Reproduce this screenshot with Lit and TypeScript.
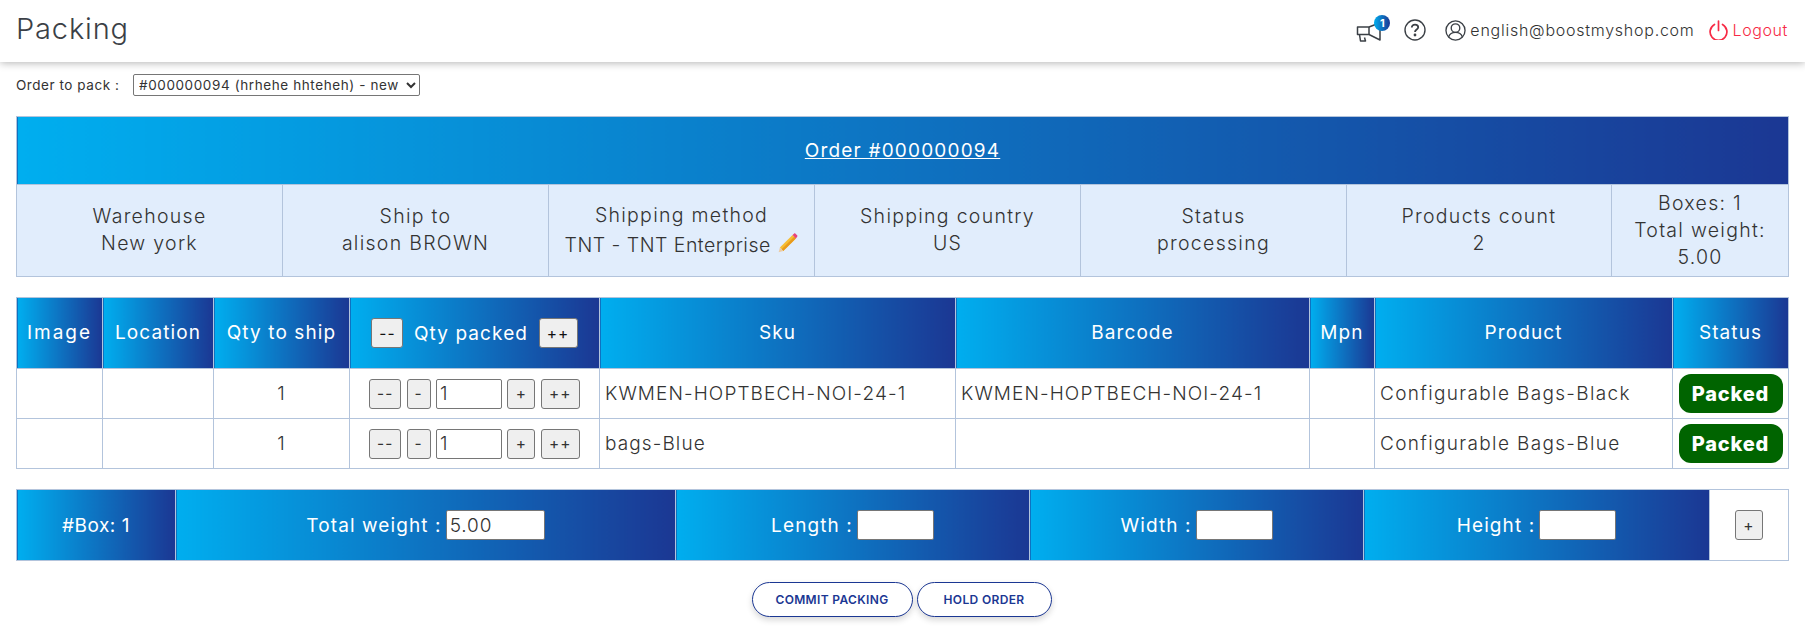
import { LitElement, html, css } from "lit";
import { customElement } from "lit/decorators.js";

const rows = [
  { sku: "KWMEN-HOPTBECH-NOI-24-1", barcode: "KWMEN-HOPTBECH-NOI-24-1", product: "Configurable Bags-Black" },
  { sku: "bags-Blue", barcode: "", product: "Configurable Bags-Blue" },
];

@customElement("app-root")
export class AppRoot extends LitElement {
  static styles = css`
    :host { display: block; height: 630px; overflow: hidden; background: #fff; color: #333;
      font-family: Inter, "Liberation Sans", sans-serif; font-size: 19px; font-weight: 350; letter-spacing: 1.1px; }
    * { box-sizing: border-box; }
    .top { height: 62px; display: flex; align-items: center; justify-content: space-between; padding: 0 17px 2px 16px;
      box-shadow: 0 1px 8px rgba(0,0,0,.3); background: #fff; }
    h1 { margin: 0 0 3px; font-weight: 300; font-size: 29px; letter-spacing: .85px; color: #3b3f46; }
    .tools { display: flex; align-items: center; font-size: 16px; letter-spacing: .75px; }
    .bell { position: relative; display: block; width: 27px; height: 24px; margin-right: 21px; }
    .bell svg { display: block; margin-top: 4px; }
    .badge { position: absolute; left: 18px; top: -3px; width: 16px; height: 16px; border-radius: 50%;
      background: linear-gradient(to right, #00aeef, #1b3793); color: #fff; font-size: 11px; font-weight: 700;
      letter-spacing: 0; display: flex; align-items: center; justify-content: center; }
    .ico { display: block; flex: none; }
    .help { margin-right: 19px; }
    .user { margin-right: 4px; }
    .logout { display: flex; align-items: center; color: #f72a45; margin-left: 14px; gap: 5px; letter-spacing: .6px; }
    .content { padding: 12px 17px 0 16px; }
    .pick { display: flex; align-items: center; height: 22px; font-size: 13.5px; font-weight: 400; letter-spacing: .55px; }
    .pick label { width: 117px; }
    select { width: 287px; height: 22px; font-family: inherit; font-size: 13.5px; font-weight: 400; letter-spacing: .6px; color: #333;
      background: #fff; border: 1px solid #767676; border-radius: 2px; padding: 0 0 0 1px; }
    table { width: 100%; border-collapse: collapse; table-layout: fixed; }
    td, th { border: 1px solid #b3c4dc; text-align: center; padding: 0; font-weight: 350; }
    th { background: linear-gradient(to right, #00aeef, #1b3793); color: #fff; font-weight: 400; }
    .order { margin-top: 20px; }
    .order th { height: 68px; letter-spacing: 1.18px; }
    .order th a { color: #fff; text-decoration: underline; }
    .order td { height: 92px; padding-bottom: 1px; background: #e1edfc; line-height: 27px; font-size: 19.5px; letter-spacing: 1.28px; }
    .order .i { width: 266px; }
    .order .i6 { width: 265px; }
    .order .i7 { width: 177px; }
    .order td.method { line-height: 30px; }
    .tight { letter-spacing: .48px; }
    .pencil { display: inline-block; vertical-align: -1px; margin-left: 1px; height: 20px; }
    .items { margin-top: 20px; }
    .items th { height: 71px; }
    .items th:not(.c4) { padding-bottom: 2px; }
    .items td { height: 50px; }
    .c1 { width: 86px; letter-spacing: 2px; } .c2 { width: 111px; } .c3 { width: 136px; } .c4 { width: 250px; }
    .c5 { width: 356px; } .c6 { width: 354px; } .c7 { width: 65px; } .c8 { width: 298px; } .c9 { width: 116px; }
    .tl { text-align: left; padding-left: 5px; }
    td.name { letter-spacing: 1.35px; }
    .qty { display: flex; align-items: center; justify-content: center; gap: 5.4px; }
    .qty-head { gap: 10.5px; }
    button { font-family: inherit; font-size: 15.5px; font-weight: 400; letter-spacing: 1px; color: #333; background: #efefef;
      border: 1px solid #767676; border-radius: 3px; height: 30px; padding: 0; flex: none; }
    th button { color: #111; }
    .b2 { width: 32px; } .b1 { width: 24px; } .p1 { width: 28px; } .p2 { width: 39px; }
    .qty input { width: 66px; }
    input { height: 30px; border: 1px solid #767676; border-radius: 2px; font-family: inherit; font-size: 19px; font-weight: 350;
      letter-spacing: .9px; color: #333; padding: 0 3px; background: #fff; }
    .status { display: flex; align-items: center; justify-content: center; margin: 0 auto; width: 104px; height: 39px;
      border-radius: 12px; background: #006400; color: #fff; font-weight: 800; font-size: 20px; letter-spacing: .8px; }
    .boxes { margin-top: 20px; }
    .boxes th { height: 71px; }
    .boxes .w1 { letter-spacing: .5px; }
    .cell { display: flex; align-items: center; justify-content: center; gap: 4px; }
    .boxes td { height: 71px; }
    .w1 { width: 159px; } .w2 { width: 500px; } .w3 { width: 354px; } .w4 { width: 334px; } .w5 { width: 346px; } .w6 { width: 79px; }
    .in-w { width: 99px; } .in-s { width: 77px; }
    .actions { display: flex; justify-content: center; gap: 4px; margin-top: 21px; padding-right: 1px; }
    .pill { height: 35px; background: #fff; color: #1b3793; border: 1px solid #1b3793; border-radius: 18px;
      font-size: 12px; font-weight: 600; letter-spacing: .35px; text-transform: uppercase; box-shadow: 0 3px 6px rgba(0,0,0,.16); }
    .commit { width: 161px; } .hold { width: 135px; }
    .plus { width: 28px; }
  `;

  private qty() {
    return html`<div class="qty">
      <button class="b2">--</button><button class="b1">-</button>
      <input value="1" /><button class="p1">+</button><button class="p2">++</button>
    </div>`;
  }

  render() {
    return html`
      <header class="top">
        <h1>Packing</h1>
        <div class="tools">
          <span class="bell">
            <svg width="26" height="21" viewBox="0 0 26 21" fill="none" stroke="#3b4046" stroke-width="1.5" stroke-linejoin="round">
              <path d="M1.5 5H13L24 .8V18L13 12.5H1.5Z" /><path d="M13 5V12.5" />
              <path d="M3.5 12.5L4.5 19H9.5L8.5 15.5" />
            </svg>
            <span class="badge">1</span>
          </span>
          <svg class="ico help" width="22" height="22" viewBox="0 0 22 22" fill="none" stroke="#3b4046" stroke-width="1.4">
            <circle cx="11" cy="11" r="10" />
            <path d="M7.8 8.5C7.8 6.6 9.2 5.6 11 5.6C12.8 5.6 14.2 6.7 14.2 8.3C14.2 10.5 11 10.6 11 13" stroke-width="1.8" />
            <circle cx="11" cy="16" r=".7" fill="#3b4046" />
          </svg>
          <svg class="ico user" width="21" height="21" viewBox="0 0 22 22" fill="none" stroke="#3b4046" stroke-width="1.4">
            <circle cx="11" cy="11" r="10" /><circle cx="11" cy="8.5" r="4.5" />
            <path d="M3.8 17.8C4.8 14.8 7.2 13 11 13C14.8 13 17.2 14.8 18.2 17.8" />
          </svg>
          <span>english@boostmyshop.com</span>
          <span class="logout">
            <svg class="ico" width="19" height="20" viewBox="0 0 19 20" fill="none" stroke="#f72a45" stroke-width="1.7" stroke-linecap="round">
              <path d="M5.5 4.5A8.4 8.4 0 1 0 13.5 4.5" /><path d="M9.5 1V10.5" />
            </svg>
            <span>Logout</span>
          </span>
        </div>
      </header>
      <main class="content">
        <div class="pick">
          <label>Order to pack :</label>
          <select><option>#000000094 (hrhehe hhteheh) - new</option></select>
        </div>
        <table class="order">
          <colgroup>
            <col class="i" /><col class="i" /><col class="i" /><col class="i" /><col class="i" /><col class="i6" /><col class="i7" />
          </colgroup>
          <tr><th colspan="7"><a href="#">Order #000000094</a></th></tr>
          <tr>
            <td>Warehouse<br />New york</td>
            <td>Ship to<br />alison BROWN</td>
            <td class="method">Shipping method<br /><span class="tight">TNT - TNT Enterprise</span>
              <svg class="pencil" width="20" height="20" viewBox="0 0 19 19">
                <path d="M13.8 2L17 5.2L5 17L1.8 13.8Z" fill="#f6bd33" />
                <path d="M15.4 3.6L17 5.2L5 17L3.4 15.4Z" fill="#e89a1c" />
                <path d="M13.8 2L15.2 .6C15.7 .2 16.2 .2 16.6 .6L18.2 2.2C18.6 2.6 18.6 3.2 18.2 3.6L17 5.2Z" fill="#e8447a" />
                <path d="M1.8 13.8L5 17L.6 18.4Z" fill="#eccba3" />
              </svg></td>
            <td>Shipping country<br />US</td>
            <td>Status<br />processing</td>
            <td>Products count<br />2</td>
            <td>Boxes: 1<br />Total weight:<br />5.00</td>
          </tr>
        </table>
        <table class="items">
          <tr>
            <th class="c1">Image</th><th class="c2">Location</th><th class="c3">Qty to ship</th>
            <th class="c4"><div class="qty qty-head"><button class="b2">--</button><span>Qty packed</span><button class="p2">++</button></div></th>
            <th class="c5">Sku</th><th class="c6">Barcode</th><th class="c7">Mpn</th><th class="c8">Product</th><th class="c9">Status</th>
          </tr>
          ${rows.map((r) => html`<tr>
            <td></td><td></td><td>1</td><td>${this.qty()}</td>
            <td class="tl">${r.sku}</td><td class="tl">${r.barcode}</td><td></td>
            <td class="tl name">${r.product}</td><td><span class="status">Packed</span></td>
          </tr>`)}
        </table>
        <table class="boxes">
          <tr>
            <th class="w1">#Box: 1</th>
            <th class="w2"><div class="cell"><span>Total weight :</span><input class="in-w" value="5.00" /></div></th>
            <th class="w3"><div class="cell"><span>Length :</span><input class="in-s" /></div></th>
            <th class="w4"><div class="cell"><span>Width :</span><input class="in-s" /></div></th>
            <th class="w5"><div class="cell"><span>Height :</span><input class="in-s" /></div></th>
            <td class="w6"><button class="plus">+</button></td>
          </tr>
        </table>
        <div class="actions">
          <button class="pill commit">Commit packing</button>
          <button class="pill hold">Hold order</button>
        </div>
      </main>
    `;
  }
}
